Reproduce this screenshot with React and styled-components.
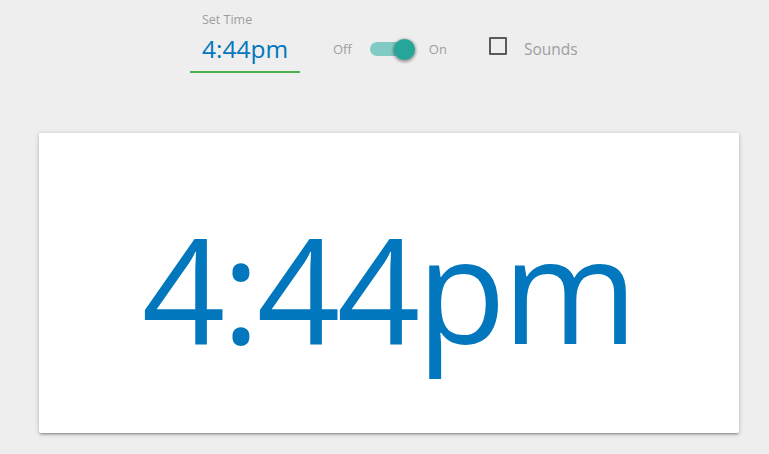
import React, { useState } from "react";
import styled, { createGlobalStyle } from "styled-components";

const GlobalStyle = createGlobalStyle`
  html, body {
    margin: 0;
    padding: 0;
    background: #eeeeee;
    font-family: "Open Sans", "Noto Sans", "Liberation Sans", sans-serif;
  }
`;

const Page = styled.div`
  min-height: 100vh;
  background: #eeeeee;
  display: flex;
  flex-direction: column;
`;

const TopBar = styled.div`
  display: flex;
  align-items: flex-end;
  padding: 12px 0 0 190px;
`;

const Field = styled.label`
  display: flex;
  flex-direction: column;
  width: 110px;
  box-sizing: border-box;
  padding: 0 12px 6px;
  border-bottom: 2px solid #4caf50;
`;

const FieldLabel = styled.span`
  font-size: 12.5px;
  line-height: 16px;
  color: #9e9e9e;
`;

const TimeInput = styled.input`
  margin-top: 5px;
  border: none;
  background: transparent;
  outline: none;
  padding: 0;
  width: 100%;
  font-family: inherit;
  font-size: 24.5px;
  line-height: 32px;
  height: 32px;
  color: #0277bd;
`;

const Controls = styled.div`
  display: flex;
  align-items: center;
  margin-left: 33px;
  margin-bottom: 13px;
  height: 22px;
`;

const SwitchText = styled.span`
  font-size: 13px;
  color: #9e9e9e;
`;

const Track = styled.button`
  position: relative;
  width: 36px;
  height: 14px;
  margin: 0 23px 0 18px;
  padding: 0;
  border: none;
  border-radius: 7px;
  background: ${(p) => (p.$on ? "#80cbc4" : "#bdbdbd")};
  cursor: pointer;
`;

const Thumb = styled.span`
  position: absolute;
  top: -3.5px;
  left: ${(p) => (p.$on ? "24.5px" : "-5px")};
  width: 21px;
  height: 21px;
  border-radius: 50%;
  background: ${(p) => (p.$on ? "#26a69a" : "#f1f1f1")};
  box-shadow: 0 1px 3px 1px rgba(0, 0, 0, 0.35);
`;

const CheckRow = styled.label`
  display: flex;
  align-items: center;
  margin-left: 42px;
  cursor: pointer;
`;

const Box = styled.span`
  width: 18px;
  height: 18px;
  box-sizing: border-box;
  border: 2px solid #5a5a5a;
  border-radius: 1px;
  margin-bottom: 7px;
`;

const CheckText = styled.span`
  margin-left: 17px;
  font-size: 15.5px;
  color: #9e9e9e;
`;

const Card = styled.div`
  margin: 60px 30px 0 39px;
  width: 700px;
  height: 300px;
  background: #ffffff;
  border-radius: 2px;
  box-shadow: 0 2px 2px 0 rgba(0, 0, 0, 0.14),
    0 3px 1px -2px rgba(0, 0, 0, 0.12), 0 1px 5px 0 rgba(0, 0, 0, 0.2);
  display: flex;
  align-items: center;
  justify-content: center;
  padding-top: 9px;
  box-sizing: border-box;
`;

const BigTime = styled.div`
  font-size: 146px;
  letter-spacing: -3.5px;
  color: #0277bd;
  margin-left: -2px;
`;

export default function App() {
  const [time, setTime] = useState("4:44pm");
  const [on, setOn] = useState(true);
  const [sounds, setSounds] = useState(false);

  return (
    <Page>
      <GlobalStyle />
      <TopBar>
        <Field>
          <FieldLabel>Set Time</FieldLabel>
          <TimeInput value={time} onChange={(e) => setTime(e.target.value)} />
        </Field>
        <Controls>
          <SwitchText>Off</SwitchText>
          <Track $on={on} onClick={() => setOn(!on)} aria-label="toggle">
            <Thumb $on={on} />
          </Track>
          <SwitchText>On</SwitchText>
          <CheckRow onClick={() => setSounds(!sounds)}>
            <Box />
            <CheckText>Sounds</CheckText>
          </CheckRow>
        </Controls>
      </TopBar>
      <Card>
        <BigTime>{time}</BigTime>
      </Card>
    </Page>
  );
}
